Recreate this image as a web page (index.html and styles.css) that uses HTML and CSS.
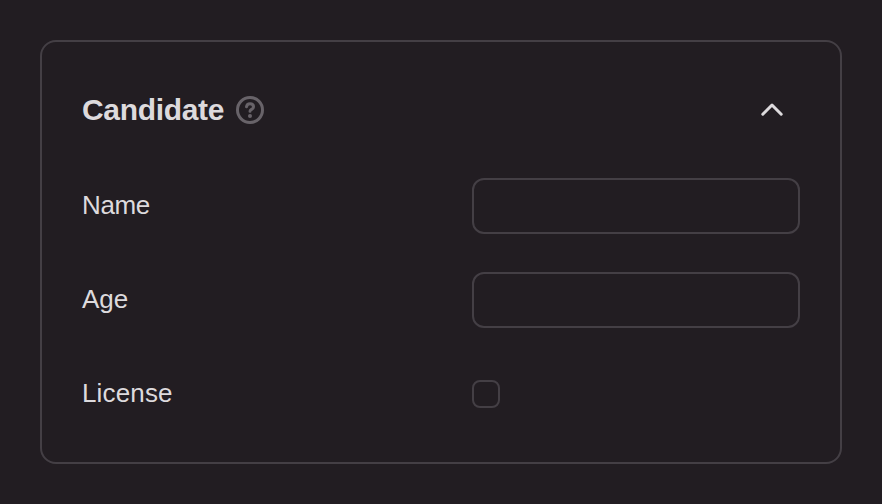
FILE: index.html
```html
<!DOCTYPE html>
<html lang="en">
<head>
<meta charset="utf-8">
<title>Candidate</title>
<link rel="stylesheet" href="styles.css">
</head>
<body>
<section class="card">
  <header class="header">
    <h2 class="title">Candidate</h2>
    <svg class="help" viewBox="0 0 28 28" fill="none" stroke="currentColor" stroke-width="3" stroke-linecap="round" stroke-linejoin="round"><circle cx="14" cy="14" r="12.5"/><path d="M10.5 10.8C10.8 8.8 12.2 7.8 14 7.8C16 7.8 17.5 9 17.5 10.9C17.5 13.3 14 13.4 14 15.2"/><circle class="dot" cx="14" cy="20" r="2"/></svg>
    <svg class="chevron" viewBox="0 0 24 14" fill="none" stroke="currentColor" stroke-width="3" stroke-linecap="round" stroke-linejoin="round"><path d="M2.8 11.2L12 2L21.2 11.2"/></svg>
  </header>
  <div class="fields">
    <label class="row"><span class="label label-tight">Name</span><input class="input" type="text"></label>
    <label class="row"><span class="label">Age</span><input class="input" type="text"></label>
    <label class="row"><span class="label label-wide">License</span><input class="checkbox" type="checkbox"></label>
  </div>
</section>
</body>
</html>
```
FILE: styles.css
```css
* { box-sizing: border-box; }
body {
  margin: 0;
  padding: 40px;
  background: #221d22;
  color: #dddadd;
  font-family: "Liberation Sans", Arial, sans-serif;
}
.card {
  height: 424px;
  padding: 38px 40px;
  border: 2px solid #443f45;
  border-radius: 16px;
}
.header {
  display: flex;
  align-items: center;
  height: 60px;
  padding-right: 16px;
}
.title {
  width: 142px;
  margin: 0 12px 0 0;
  font-size: 30px;
  line-height: 36px;
  letter-spacing: -0.33px;
  white-space: nowrap;
}
.help { width: 28px; height: 28px; color: #686369; }
.dot { fill: currentColor; stroke: none; }
.chevron { width: 24px; height: 14px; margin-left: auto; }
.fields { display: grid; gap: 38px; margin-top: 38px; }
.row {
  display: grid;
  grid-template-columns: 390px 1fr;
  align-items: center;
  height: 56px;
  font-size: 26px;
}
.label { padding-bottom: 2px; }
.label-tight { letter-spacing: -0.35px; }
.label-wide { letter-spacing: 0.15px; }
.input, .checkbox {
  appearance: none;
  margin: 0;
  border: 2px solid #443f45;
  background: transparent;
  color: inherit;
}
.input { width: 100%; height: 56px; border-radius: 12px; }
.checkbox { width: 28px; height: 28px; border-radius: 8px; }
```
